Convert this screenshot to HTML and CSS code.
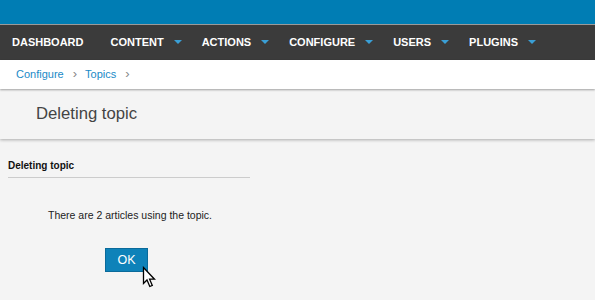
FILE: index.html
```html
<!DOCTYPE html>
<html>
<head>
<meta charset="utf-8">
<link rel="stylesheet" href="styles.css">
</head>
<body>
<div class="topbar"></div>
<nav class="nav">
  <div class="nav-item">DASHBOARD</div>
  <div class="nav-item has-menu">CONTENT<span class="caret"></span></div>
  <div class="nav-item has-menu">ACTIONS<span class="caret"></span></div>
  <div class="nav-item has-menu">CONFIGURE<span class="caret"></span></div>
  <div class="nav-item has-menu">USERS<span class="caret"></span></div>
  <div class="nav-item has-menu">PLUGINS<span class="caret"></span></div>
</nav>
<div class="breadcrumb">
  <a class="crumb">Configure</a>
  <span class="sep">&#x203A;</span>
  <a class="crumb">Topics</a>
  <span class="sep">&#x203A;</span>
</div>
<div class="page-header">
  <h1 class="page-title">Deleting topic</h1>
</div>
<main class="content">
  <h2 class="section-title">Deleting topic</h2>
  <p class="message">There are 2 articles using the topic.</p>
  <div class="actions">
    <button class="btn">OK</button>
    <svg class="cursor" width="14" height="22" viewBox="0 0 14 22">
      <polygon points="1.5,1.5 1.5,17.5 5,14 7.8,20.5 10.3,19.4 7.6,13.2 12.5,13.2" fill="#ffffff" stroke="#000000" stroke-width="1.3"/>
    </svg>
  </div>
</main>
</body>
</html>
```
FILE: styles.css
```css
html, body {
  margin: 0;
  padding: 0;
}
body {
  background: #f4f4f4;
  font-family: "Liberation Sans", Arial, sans-serif;
  color: #222;
  min-height: 300px;
}
.topbar {
  height: 24px;
  background: #007db4;
  border-bottom: 1px solid #9a9a9a;
}
.nav {
  height: 33px;
  padding-bottom: 2px;
  background: #3b3b3b;
  display: flex;
  align-items: center;
}
.nav-item {
  color: #fff;
  font-weight: bold;
  font-size: 11px;
  padding: 0 15px 0 12px;
  display: flex;
  align-items: center;
  height: 100%;
}
.nav-item.has-menu {
  padding-right: 8px;
}
.caret {
  display: inline-block;
  width: 0;
  height: 0;
  margin-left: 10px;
  border-left: 4px solid transparent;
  border-right: 4px solid transparent;
  border-top: 4px solid #3a9fd6;
  margin-top: 1px;
}
.breadcrumb {
  height: 27px;
  padding-bottom: 2px;
  background: #fff;
  display: flex;
  align-items: center;
  padding-left: 16px;
  font-size: 11px;
  box-shadow: 0 1px 2px rgba(0,0,0,0.35);
  position: relative;
  z-index: 2;
}
.crumb {
  color: #1a8ac7;
}
.sep {
  color: #888;
  font-size: 13px;
  margin: 0 8px 0 9px;
  line-height: 1;
}
.page-header {
  height: 50px;
  background: #f4f4f4;
  display: flex;
  align-items: center;
  box-shadow: 0 1px 3px rgba(0,0,0,0.3);
  position: relative;
  z-index: 1;
}
.page-title {
  margin: 0 0 1px 36px;
  font-size: 16.7px;
  font-weight: normal;
  color: #444;
}
.content {
  padding: 0 8px;
}
.section-title {
  margin: 0;
  padding-top: 21px;
  width: 242px;
  font-size: 10px;
  font-weight: bold;
  color: #111;
  line-height: 12px;
  padding-bottom: 5px;
  border-bottom: 1px solid #cccccc;
}
.message {
  margin: 0;
  padding: 31px 0 0 40px;
  font-size: 10.5px;
  line-height: 12px;
}
.actions {
  position: relative;
  padding: 27px 0 0 97px;
}
.btn {
  width: 43px;
  height: 24px;
  padding: 0;
  background: #0e82b9;
  border: 1px solid #0a6a9a;
  color: #fff;
  font-family: "Liberation Sans", Arial, sans-serif;
  font-size: 12.5px;
  display: block;
}
.cursor {
  position: absolute;
  left: 134px;
  top: 45px;
  width: 14px;
  height: 22px;
  display: block;
  z-index: 3;
}
```
